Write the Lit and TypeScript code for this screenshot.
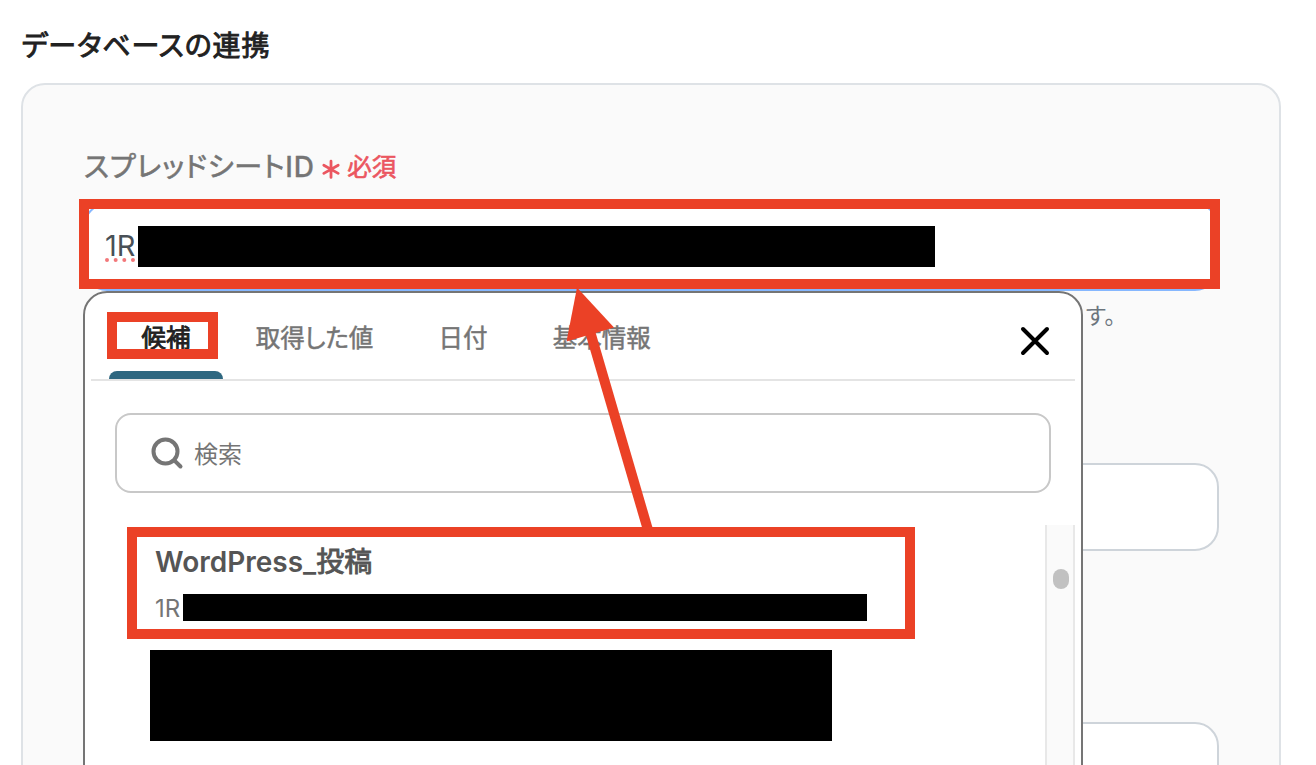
import { css, html, LitElement, svg } from "lit";
import { customElement, property, state } from "lit/decorators.js";
import { classMap } from "lit/directives/class-map.js";

const TABS = ["候補", "取得した値", "日付", "基本情報"];

// x, y, width, height of the outer edge
const FRAMES = [
  [79, 199, 1141, 90],
  [107, 312, 111, 47],
  [127, 527, 788, 112],
];

@customElement("suggest-popup")
export class SuggestPopup extends LitElement {
  @state()
  active = 0;

  render() {
    return html`
      <div class="header">
        <div class="tabs">
          ${TABS.map(
            (tab, i) => html`
              <div
                class=${classMap({ tab: true, active: i === this.active })}
                @click=${() => (this.active = i)}
              >
                ${tab}
              </div>
            `
          )}
        </div>
        <svg class="close" width="30" height="30" viewBox="0 0 30 30">
          <path d="M3 3 L27 27 M27 3 L3 27" />
        </svg>
      </div>
      <div class="search">
        <svg class="glass" width="34" height="34" viewBox="0 0 34 34">
          <circle cx="15.5" cy="15.5" r="12" />
          <path d="M24.3 24.3 L30.5 30.5" />
        </svg>
        <span>検索</span>
      </div>
      <div class="list">
        <div class="items">
          <div class="name">WordPress_<span class="kanji">投稿</span></div>
          <div class="id"><span>1R</span><i class="mask"></i></div>
          <i class="mask block"></i>
        </div>
        <div class="track"><div class="thumb"></div></div>
      </div>
    `;
  }

  static styles = css`
    :host {
      display: flex;
      flex-direction: column;
      box-sizing: border-box;
      width: 1000px;
      height: 700px;
      padding: 0 6px;
      background: #fff;
      border: 2px solid #757575;
      border-radius: 24px;
    }
    .header {
      display: flex;
      flex: none;
      justify-content: space-between;
      height: 86px;
      padding: 0 25px 0 18px;
      border-bottom: 2px solid #e4e4e4;
    }
    .tabs {
      display: flex;
    }
    .tab {
      display: flex;
      flex-direction: column;
      box-sizing: border-box;
      height: 86px;
      padding: 27px 32.6px 0;
      font-size: 24.5px;
      line-height: 36px;
      font-weight: 400;
      font-feature-settings: "palt";
      color: #757575;
      -webkit-text-stroke: 0.5px;
    }
    .tab.active {
      color: #212121;
      -webkit-text-stroke: 0.9px;
    }
    .tab.active::after {
      content: "";
      height: 8px;
      margin: auto -32.6px 0;
      border-radius: 8px 8px 0 0;
      background: #2e6780;
    }
    .close {
      margin-top: 33px;
    }
    .close path {
      fill: none;
      stroke: #000;
      stroke-width: 4;
      stroke-linecap: round;
    }
    .search {
      display: flex;
      flex: none;
      align-items: center;
      box-sizing: border-box;
      height: 80px;
      margin: 32px 24px 0;
      padding-left: 33px;
      gap: 10px;
      border: 2px solid #c8c8c8;
      border-radius: 16px;
      font-size: 24px;
      color: #757575;
    }
    .search span {
      margin-bottom: 2px;
    }
    .glass {
      fill: none;
      stroke: #757575;
      stroke-width: 4;
      stroke-linecap: round;
    }
    .list {
      display: flex;
      flex: 1;
      justify-content: space-between;
      margin-top: 32px;
    }
    .items {
      padding: 17px 0 0 64px;
    }
    .name {
      height: 40px;
      line-height: 40px;
      font-size: 28px;
      font-weight: 600;
      color: #555;
    }
    .kanji {
      font-weight: 400;
      -webkit-text-stroke: 0.9px;
    }
    .id {
      display: flex;
      align-items: center;
      height: 31px;
      margin-top: 11px;
      font-size: 24px;
      color: #757575;
    }
    .id span {
      width: 28px;
    }
    .mask {
      display: block;
      width: 684px;
      height: 27px;
      background: #000;
    }
    .id .mask {
      margin-bottom: 2px;
    }
    .block {
      width: 682px;
      height: 91px;
      margin: 26px 0 0 -5px;
    }
    .track {
      box-sizing: border-box;
      width: 30px;
      padding: 44px 6px 0;
      border: solid #e8e8e8;
      border-width: 0 2px;
      background: #fafafa;
    }
    .thumb {
      height: 20px;
      width: 16px;
      border-radius: 8px;
      background: #c1c1c1;
    }
  `;
}

@customElement("mark-layer")
export class MarkLayer extends LitElement {
  @property({ type: Array })
  frames: number[][] = [];

  render() {
    return html`
      <svg width="1316" height="765" viewBox="0 0 1316 765">
        ${this.frames.map(
          ([x, y, w, h]) => svg`
            <rect x=${x + 5} y=${y + 5} width=${w - 10} height=${h - 10} />
          `
        )}
        <path class="shaft" d="M590.5 333 L648 530" />
        <path class="head" d="M577 287.5 L614 327.5 L566.5 341.5 Z" />
      </svg>
    `;
  }

  static styles = css`
    svg {
      display: block;
    }
    rect,
    .shaft {
      fill: none;
      stroke: #eb4126;
      stroke-width: 10;
    }
    .head {
      fill: #eb4126;
    }
  `;
}

@customElement("app-root")
export class AppRoot extends LitElement {
  render() {
    return html`
      <h2 class="title">データベースの連携</h2>
      <section class="card">
        <div class="label">
          <span class="text">スプレッドシート<span class="latin">ID</span></span>
          <svg class="star" width="20" height="20" viewBox="0 0 20 20">
            <path d="M10 2.2 V18.4 M2.8 6.2 L17.2 14.4 M17.2 6.2 L2.8 14.4" />
          </svg>
          <span class="required">必須</span>
        </div>
        <div class="input focus">
          <span class="value">1R</span><i class="mask"></i>
        </div>
        <div class="help">ます。</div>
        <div class="input second"></div>
        <div class="input third"></div>
      </section>
      <suggest-popup class="popup"></suggest-popup>
      <mark-layer class="marks" .frames=${FRAMES}></mark-layer>
    `;
  }

  static styles = css`
    :host {
      display: block;
      position: relative;
      box-sizing: border-box;
      width: 1316px;
      height: 765px;
      padding: 26px 35px 0 21px;
      overflow: hidden;
      background: #fff;
      font-family: Inter, "Noto Sans CJK JP", sans-serif;
    }
    .title {
      margin: 0 0 17px;
      padding-left: 0.5px;
      height: 40px;
      line-height: 40px;
      font-size: 28px;
      font-weight: 400;
      letter-spacing: 0.85px;
      color: #212121;
      font-feature-settings: "palt";
      -webkit-text-stroke: 0.9px;
      white-space: nowrap;
    }
    .card {
      box-sizing: border-box;
      height: 900px;
      padding: 60px 60px 0;
      border: 2px solid #dee2e6;
      border-radius: 24px;
      background: #fafafa;
    }
    .label {
      display: flex;
      align-items: center;
      height: 40px;
      margin-bottom: 18px;
      white-space: nowrap;
    }
    .text {
      margin: -1px 0 0 1px;
      font-size: 28px;
      font-weight: 400;
      letter-spacing: 0.8px;
      color: #757575;
      font-feature-settings: "palt";
      -webkit-text-stroke: 0.6px;
    }
    .latin {
      font-weight: 500;
      -webkit-text-stroke: 0.3px;
    }
    .star {
      margin: 8px 6px 0 6.5px;
      stroke: #eb5660;
      stroke-width: 2.8;
      stroke-linecap: round;
    }
    .required {
      margin-top: 1px;
      font-size: 24.5px;
      color: #eb5660;
      -webkit-text-stroke: 0.6px;
    }
    .input {
      display: flex;
      align-items: center;
      box-sizing: border-box;
      height: 88px;
      padding-left: 20px;
      border: 2px solid #ced4da;
      border-radius: 24px;
      background: #fff;
    }
    .focus {
      padding-bottom: 2px;
      border-color: #86b7fe;
    }
    .value {
      width: 33px;
      margin-bottom: 2px;
      font-size: 29px;
      color: #495057;
      text-decoration: underline dotted #f2777a 4px;
      text-underline-offset: 3px;
      text-decoration-skip-ink: none;
    }
    .mask {
      width: 797px;
      height: 41px;
      background: #000;
    }
    .help {
      height: 32px;
      margin-top: 9px;
      padding-left: 979px;
      line-height: 32px;
      font-size: 22.4px;
      color: #6c757d;
    }
    .second {
      margin-top: 131px;
    }
    .third {
      margin-top: 171px;
    }
    .popup {
      position: absolute;
      left: 83px;
      top: 291px;
    }
    .marks {
      position: absolute;
      left: 0;
      top: 0;
      pointer-events: none;
    }
  `;
}
